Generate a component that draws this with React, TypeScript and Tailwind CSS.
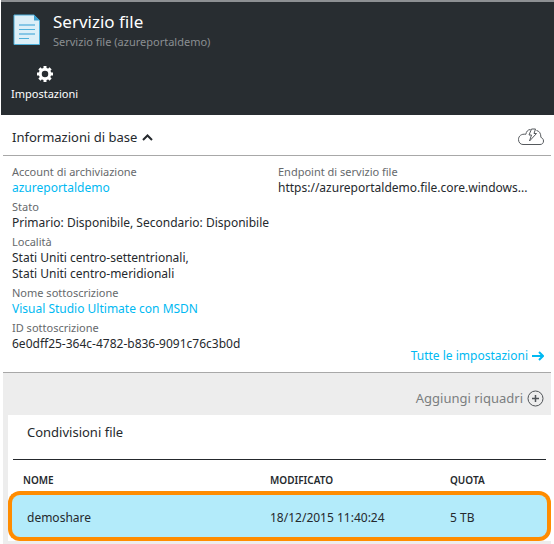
import type { ReactNode } from "react";

function DocumentIcon() {
  return (
    <svg width="28" height="32" viewBox="0 0 28 32" aria-hidden="true">
      <path d="M1 1H21L26.5 6.5V30.5H1Z" fill="#dceff8" stroke="#4fb0da" strokeWidth="1" />
      <path d="M21 .5L27 6.5H21Z" fill="#3c9fcd" />
      <path d="M6 11H22M6 20H22" stroke="#85c6e6" strokeWidth="2" />
      <path d="M6 15.5H22M6 24.5H16" stroke="#4fb0da" strokeWidth="1" />
    </svg>
  );
}

function GearIcon() {
  return (
    <svg width="16" height="16" viewBox="0 0 16 16" aria-hidden="true">
      <circle cx="8" cy="8" r="4.75" fill="none" stroke="#fff" strokeWidth="3" />
      <g stroke="#fff" strokeWidth="3">
        <path d="M8 0V3M8 13V16M0 8H3M13 8H16" />
        <path d="M2.4 2.4L4.4 4.4M11.6 11.6L13.6 13.6M2.4 13.6L4.4 11.6M11.6 4.4L13.6 2.4" />
      </g>
    </svg>
  );
}

function CloudIcon() {
  return (
    <svg width="28" height="18" viewBox="0 0 28 18" fill="none" stroke="#55595d" strokeWidth="1" aria-hidden="true">
      <path d="M13.5 1.5C10.8 1.5 9.3 3.8 8.8 6.3C4.4 5.6 1.5 8 1.5 11.5C1.5 14.5 3.5 16.5 6 16.5H23C25.3 16.5 26.5 15 26.5 13C26.5 11 25.3 10 23.9 9.4C23.9 5.5 22.5 3 19.5 2.5" />
      <path d="M14.5 1L12 7H14.5L12.5 13L19.5 5.5H17L18.5 1Z" />
    </svg>
  );
}

function Field({ label, children }: { label: string; children: ReactNode }) {
  return (
    <div>
      <dt className="text-[11px] leading-4 text-[#66696c]">{label}</dt>
      <dd className="text-xs whitespace-nowrap">{children}</dd>
    </div>
  );
}

const shares = [{ name: "demoshare", modified: "18/12/2015 11:40:24", quota: "5 TB" }];

export default function App() {
  return (
    <main className="bg-white font-['Noto_Sans',sans-serif] text-[#25292d]">
      <header className="ml-px h-[115px] border-t-2 border-[#8d9093] bg-[#282d31] pt-2 text-white">
        <div className="flex gap-3 pl-3">
          <div className="pt-1">
            <DocumentIcon />
          </div>
          <div>
            <h1 className="text-[17px] leading-6">Servizio file</h1>
            <p className="text-[11px] leading-4 text-[#8b8f92]">Servizio file (azureportaldemo)</p>
          </div>
        </div>
        <button type="button" className="ml-[10px] mt-4 flex flex-col items-center gap-1 text-[11px] leading-4">
          <GearIcon />
          Impostazioni
        </button>
      </header>

      <div className="mx-[3px]">
        <section>
          <div className="flex h-[41px] items-center justify-between border-b border-[#a8a8a8] pl-[9px] pr-[6px] pt-1">
            <button type="button" className="flex items-center gap-[5px] text-[13px] leading-5">
              Informazioni di base
              <svg width="11" height="7" viewBox="0 0 11 7" fill="none" stroke="#25292d" strokeWidth="2" aria-hidden="true">
                <path d="M1 6L5.5 1.5L10 6" />
              </svg>
            </button>
            <CloudIcon />
          </div>
          <div className="grid grid-cols-[266px_1fr] border-b border-[#a8a8a8] pb-2 pl-[9px] pt-2">
            <dl className="flex flex-col gap-[3px] pb-3">
              <Field label="Account di archiviazione">
                <a href="#account" className="text-[#00b9f2]">azureportaldemo</a>
              </Field>
              <Field label="Stato">Primario: Disponibile, Secondario: Disponibile</Field>
              <Field label="Località">
                Stati Uniti centro-settentrionali,
                <br />
                Stati Uniti centro-meridionali
              </Field>
              <Field label="Nome sottoscrizione">
                <a href="#subscription" className="text-[#00b9f2]">Visual Studio Ultimate con MSDN</a>
              </Field>
              <Field label="ID sottoscrizione">6e0dff25-364c-4782-b836-9091c76c3b0d</Field>
            </dl>
            <div className="flex flex-col justify-between">
              <dl>
                <Field label="Endpoint di servizio file">https://azureportaldemo.file.core.windows...</Field>
              </dl>
              <a href="#settings" className="mr-[7px] flex items-center gap-1 self-end text-xs text-[#00b9f2]">
                Tutte le impostazioni
                <svg width="12" height="10" viewBox="0 0 12 10" fill="none" stroke="currentColor" strokeWidth="2" aria-hidden="true">
                  <path d="M0 5H11M7 1L11 5L7 9" />
                </svg>
              </a>
            </div>
          </div>
        </section>

        <section className="bg-[#ededed] pb-1 pl-[5px]">
          <div className="flex h-[42px] items-center justify-end pr-[7px] pt-2">
            <button type="button" className="flex items-center gap-1 text-[13px] leading-5 text-[#7b7e80]">
              Aggiungi riquadri
              <svg width="17" height="17" viewBox="0 0 17 17" fill="none" stroke="#4f5357" aria-hidden="true">
                <circle cx="8.5" cy="8.5" r="7.5" />
                <path d="M5 8.5H12M8.5 5V12" strokeWidth="1.5" />
              </svg>
            </button>
          </div>
          <div className="bg-white">
            <h2 className="mx-[5px] flex h-[45px] items-center border-b border-[#25292d] pb-2 pl-[14px] text-[13px]">
              Condivisioni file
            </h2>
            <table className="w-full table-fixed border-separate border-spacing-0 text-left">
              <thead>
                <tr className="h-[31px] text-[10px]">
                  <th className="w-[262px] pl-[15px] pt-[10px] font-semibold">NOME</th>
                  <th className="w-[180px] pt-[10px] font-semibold">MODIFICATO</th>
                  <th className="pt-[10px] font-semibold">QUOTA</th>
                </tr>
              </thead>
              <tbody>
                {shares.map((share) => (
                  <tr key={share.name} className="h-[50px] text-xs">
                    <td className="rounded-l-xl border-y-4 border-l-4 border-[#ff8c00] bg-[#b3ebfa] pl-[15px] pt-1">{share.name}</td>
                    <td className="border-y-4 border-[#ff8c00] bg-[#b3ebfa] pt-1">{share.modified}</td>
                    <td className="rounded-r-xl border-y-4 border-r-4 border-[#ff8c00] bg-[#b3ebfa] pt-1">{share.quota}</td>
                  </tr>
                ))}
              </tbody>
            </table>
          </div>
        </section>
      </div>
    </main>
  );
}
